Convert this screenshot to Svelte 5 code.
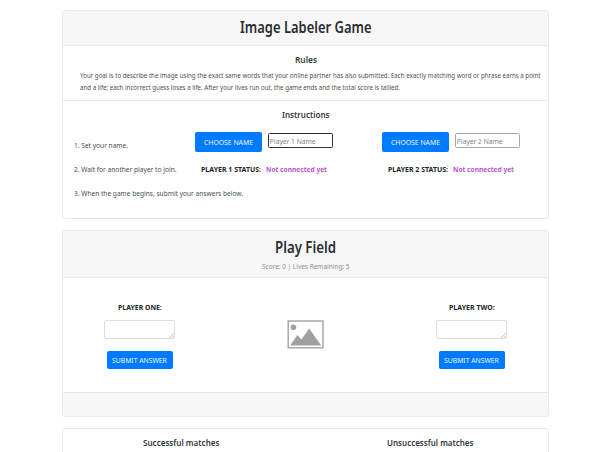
<script>
  const players = [
    { id: 1, word: 'ONE', wordWidth: 43.8, focused: true },
    { id: 2, word: 'TWO', wordWidth: 45.7, focused: false }
  ];

  // Condenses a label horizontally so that it fills the given width.
  function fit(node, width) {
    const natural = node.getBoundingClientRect().width;
    node.style.transform = `scaleX(${width / natural})`;
  }
</script>

{#snippet label(text, width)}
  <span class="fit" style:width="{width}px"><span class="glyphs" use:fit={width}>{text}</span></span>
{/snippet}

<main>
  <section class="card intro">
    <header class="title-bar"><h1>{@render label('Image Labeler Game', 131.5)}</h1></header>
    <div class="rules">
      <h2>{@render label('Rules', 22)}</h2>
      <p>
        {@render label('Your goal is to describe the image using the exact same words that your online partner has also submitted. Each exactly matching word or phrase earns a point', 460.5)}
        {@render label('and a life; each incorrect guess loses a life. After your lives run out, the game ends and the total score is tallied.', 320)}
      </p>
    </div>
    <div class="instructions">
      <h2>{@render label('Instructions', 47.5)}</h2>
      <div class="row names">
        <span class="step">{@render label('1. Set your name.', 54)}</span>
        {#each players as p}
          <div class="chooser">
            <button class="choose">{@render label('CHOOSE NAME', 49)}</button>
            <div class="box" class:focused={p.focused}><input placeholder="Player {p.id} Name" /></div>
          </div>
        {/each}
      </div>
      <div class="row">
        <span class="step">{@render label('2. Wait for another player to join.', 102.5)}</span>
        {#each players as p}
          <div class="status">
            <b>{@render label(`PLAYER ${p.id} STATUS:`, 60)}</b>
            <b class="state">{@render label('Not connected yet', 61)}</b>
          </div>
        {/each}
      </div>
      <div class="row"><span class="step">{@render label('3. When the game begins, submit your answers below.', 169)}</span></div>
    </div>
  </section>

  <section class="card play">
    <header class="play-head">
      <h1>{@render label('Play Field', 61)}</h1>
      <div class="score">{@render label('Score: 0 | Lives Remaining: 5', 87.5)}</div>
    </header>
    <div class="field">
      {#each players as p, i}
        {#if i === 1}
          <svg class="picture" width="37" height="29" viewBox="0 0 37 29">
            <rect x="1.2" y="1" width="34.8" height="26.8" fill="#fff" stroke="#a3a3a3" stroke-width="1.4" />
            <circle cx="6.4" cy="7.2" r="2.8" fill="#a0a0a0" />
            <path d="M3 25.6 10.5 15 14.4 19.4 22.2 8.6 34.2 25.6Z" fill="#a0a0a0" />
          </svg>
        {/if}
        <div class="player">
          <b>{@render label(`PLAYER ${p.word}:`, p.wordWidth)}</b>
          <div class="answer">
            <svg width="5" height="5" viewBox="0 0 5 5"><path d="M0 5 5 0M2.7 5 5 2.7" stroke="#bbb" stroke-width=".8" /></svg>
          </div>
          <button class="submit">{@render label('SUBMIT ANSWER', 54.8)}</button>
        </div>
      {/each}
    </div>
    <footer></footer>
  </section>

  <section class="card matches">
    <h2>{@render label('Successful matches', 76.5)}</h2>
    <h2>{@render label('Unsuccessful matches', 86.5)}</h2>
  </section>
</main>

<style>
  :global(body) { background: #fff; overflow: hidden; }
  main {
    box-sizing: border-box; width: 600px; height: 452px; overflow: hidden;
    padding: 10px 51px 0 62px; display: flex; flex-direction: column;
    font-family: "Noto Sans", "Open Sans", sans-serif;
    font-size: 7.8px; color: #212529; white-space: nowrap;
  }
  .fit { display: inline-block; text-align: left; vertical-align: top; }
  .glyphs { display: inline-block; transform-origin: 0 50%; vertical-align: top; }
  .card { box-sizing: border-box; flex: none; border: 1px solid #e9e9e9; border-radius: 3px; background: #fff; overflow: hidden; }
  .intro { height: 209px; margin-bottom: 11px; }
  .play { height: 187px; margin-bottom: 11px; }
  h1, h2, p { margin: 0; }
  h1 { font-size: 16px; font-weight: 600; line-height: 18px; text-align: center; color: #2a2e32; }
  h2 { font-size: 9.6px; font-weight: 600; line-height: 12px; text-align: center; color: #34393d; }
  header { background: #f7f7f7; border-bottom: 1px solid #e5e5e5; box-sizing: border-box; }
  .title-bar { height: 35px; padding-top: 7px; }
  .rules { height: 55px; box-sizing: border-box; border-bottom: 1px solid #e9e9e9; padding-top: 8px; }
  .rules p { padding: 4px 0 0 17px; line-height: 11.5px; color: #4b5054; display: flex; flex-direction: column; }
  .instructions { padding-top: 8px; }
  .row { display: grid; grid-template-columns: 132px 187px 1fr; align-items: center; height: 24px; line-height: 12px; color: #4b5054; }
  .names { height: 36px; padding-top: 5px; box-sizing: border-box; }
  .step { padding-left: 10.5px; }
  .names .step { padding-top: 7px; }
  .chooser { display: flex; align-items: center; gap: 6px; }
  button { font: inherit; line-height: 12px; border: 0; border-radius: 2px; background: #007bff; color: #eef6ff; padding: 0; white-space: nowrap; }
  .choose { width: 67px; height: 20px; }
  .box { box-sizing: border-box; width: 65px; height: 15px; border: 1px solid #a8a8a8; border-radius: 1.5px; margin-bottom: 2px; overflow: hidden; }
  .box.focused { border-color: #333; }
  input { display: block; box-sizing: border-box; width: 74px; height: 13px; padding: 0 1px; border: 0; background: none; font: inherit; outline: 0; transform: scaleX(.86); transform-origin: 0 50%; }
  input::placeholder { color: #858585; opacity: 1; }
  .status { padding-left: 5.5px; display: flex; gap: 5.5px; color: #212529; }
  .state { color: #ba55d3; }
  .play-head { height: 47px; padding-top: 7px; text-align: center; }
  .score { color: #8a9197; line-height: 10px; padding-top: 5px; }
  .field { height: 114px; box-sizing: border-box; padding: 23px 41px 0; display: flex; justify-content: space-between; align-items: flex-start; }
  .player { width: 71px; display: flex; flex-direction: column; align-items: center; }
  .player b { line-height: 12px; }
  .answer { box-sizing: border-box; width: 71px; height: 19px; margin: 7px 0 12px; border: 1px solid #ddd; border-radius: 2px; display: flex; align-items: flex-end; justify-content: flex-end; }
  .submit { width: 66px; height: 18px; }
  .picture { margin-top: 19px; }
  footer { height: 24px; background: #f7f7f7; border-top: 1px solid #e5e5e5; }
  .matches { height: 50px; display: grid; grid-template-columns: 236px 262px; padding-top: 8px; }
</style>
